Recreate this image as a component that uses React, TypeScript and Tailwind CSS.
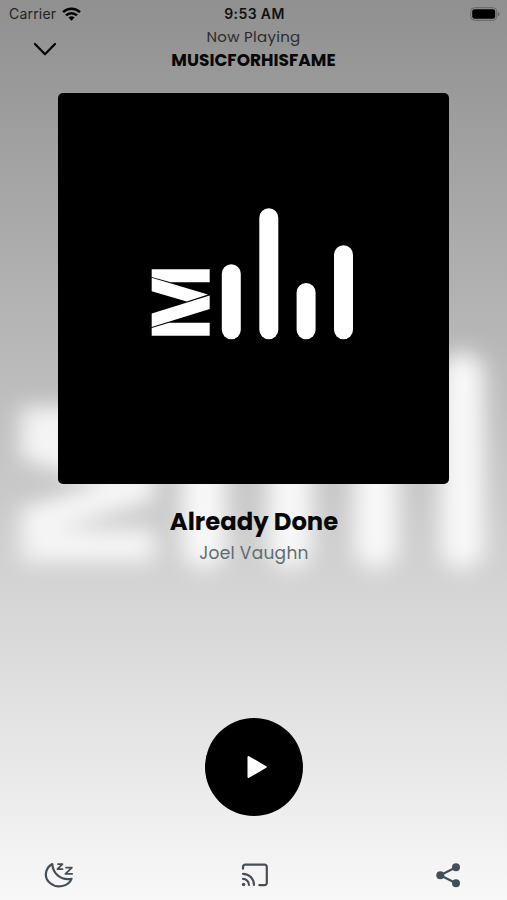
interface LogoProps {
  className?: string;
  fill: string;
}

function Logo({ className, fill }: LogoProps) {
  return (
    <svg viewBox="0 0 391 391" className={className} fill={fill}>
      <path d="M93.7 176.3h58v13h-39L93.7 184z" />
      <path d="M93.7 184.8l56.3 16.8-21.3 6.8-35-10.2z" />
      <path d="M151.7 202.5V216l-58 18v-13.5z" />
      <path d="M151.7 229.7v13h-58v-7.8l17.500-5.200z" />
      <rect x="163.8" y="171.3" width="19" height="75" rx="9.5" />
      <rect x="201.3" y="115.2" width="19" height="131" rx="9.5" />
      <rect x="238.6" y="190" width="19" height="56.2" rx="9.5" />
      <rect x="276" y="152.3" width="19" height="94" rx="9.5" />
    </svg>
  );
}

function Backdrop() {
  return (
    <div className="absolute inset-0 -z-10 overflow-hidden bg-black">
      <Logo
        fill="#f8f8f8"
        className="absolute left-1/2 top-[2px] size-[900px] max-w-none -translate-x-[449px] blur-[10.5px]"
      />
      <div className="absolute inset-0 bg-linear-to-b from-[#f8f8f8]/58 to-[#f8f8f8]" />
    </div>
  );
}

function StatusBar() {
  return (
    <div className="grid h-[27px] grid-cols-3 items-center pl-[9px] pr-[7px] font-['Inter','Liberation_Sans',sans-serif] text-[14px] text-[#222]">
      <div className="flex items-center gap-[6px]">
        <span className="tracking-[0.2px]">Carrier</span>
        <svg width="19" height="14" viewBox="0 0 19 14" fill="none" stroke="#000" strokeWidth="2.5">
          <path d="M1 5.1a12.2 12.2 0 0 1 17 0" />
          <path d="M4 8.4a7.8 7.8 0 0 1 11 0" />
          <path d="M9.5 13.7L6.5 10.6a4.3 4.3 0 0 1 6 0z" fill="#000" stroke="none" />
        </svg>
      </div>
      <span className="text-center font-semibold tracking-[0.4px] text-[#111]">9:53 AM</span>
      <svg className="justify-self-end" width="30" height="14" viewBox="0 0 30 14">
        <rect x="0.7" y="0.7" width="26" height="12.6" rx="3.8" fill="none" stroke="#666" strokeWidth="1" />
        <rect x="2.2" y="2.2" width="23" height="9.6" rx="2.4" />
        <path d="M27.9 4.7c2.2.8 2.2 3.8 0 4.6z" fill="#666" />
      </svg>
    </div>
  );
}

function Header() {
  return (
    <header className="relative h-[66px] text-center">
      <button aria-label="Close" className="absolute left-[33px] top-[15px]">
        <svg width="24" height="15" viewBox="0 0 24 15" fill="none" stroke="#000" strokeWidth="2.2" strokeLinecap="round" strokeLinejoin="round">
          <path d="M2 2l10 10.3L22 2" />
        </svg>
      </button>
      <p className="text-[15px] leading-[20px] tracking-[0.3px] text-[#2c2c2c]">Now Playing</p>
      <h1 className="mt-[3px] text-[17px] font-bold leading-[21px] text-[#080808]">MUSICFORHISFAME</h1>
    </header>
  );
}

function SleepIcon() {
  return (
    <svg width="30" height="28" viewBox="0 0 30 28" fill="none" stroke="#434f57" strokeWidth="2.2" strokeLinejoin="round" strokeLinecap="round">
      <path d="M8.3 3C1 7-.5 17 6 22c7 6 18.5 3.5 21.5-4.2-5.5 1-10-.2-13.5-3.1C10.5 11.7 8.5 8 8.3 3z" />
      <path d="M13.3 3.2h5.2l-5.1 5h5.8M21.3 6.6h6.6l-6.5 6.2h7.4" strokeWidth="1.8" strokeLinecap="butt" />
    </svg>
  );
}

function CastIcon() {
  return (
    <svg width="28" height="26" viewBox="0 0 28 26" fill="none" stroke="#434f57" strokeWidth="2.2" strokeLinecap="round">
      <path d="M2 6.7V4.9A2.3 2.3 0 0 1 4.3 2.6h19.2a2.3 2.3 0 0 1 2.3 2.3v15.9a2.3 2.3 0 0 1-2.3 2.3h-5.2" />
      <path d="M2 11.8c6.2 0 11 5 11 11.2M2 16.9c3.3 0 6 2.7 6 6.1" />
      <circle cx="2.6" cy="22.5" r="1.7" fill="#434f57" stroke="none" />
    </svg>
  );
}

function ShareIcon() {
  return (
    <svg width="26" height="26" viewBox="0 0 26 26" fill="#434f57">
      <path d="M21 5.3L5.3 13.3l15.7 8" fill="none" stroke="#434f57" strokeWidth="2.2" />
      <circle cx="21" cy="5.3" r="4" />
      <circle cx="5.3" cy="13.3" r="4" />
      <circle cx="21" cy="21.3" r="4" />
    </svg>
  );
}

export default function App() {
  return (
    <div className="relative isolate flex h-[900px] w-[507px] flex-col overflow-hidden font-['Poppins','Inter','Liberation_Sans',sans-serif]">
      <Backdrop />
      <StatusBar />
      <Header />
      <div className="ml-[58px] size-[391px] shrink-0 overflow-hidden rounded-[5px] bg-black">
        <Logo fill="#fff" className="size-full" />
      </div>
      <div className="mt-[22px] pl-px text-center">
        <h2 className="text-[24.3px] font-bold leading-[32px] text-[#080808]">Already Done</h2>
        <p className="mt-[3px] text-[17px] leading-[24px] tracking-[0.3px] text-[#606b70]">Joel Vaughn</p>
      </div>
      <button aria-label="Play" className="mt-[153px] flex size-[98px] shrink-0 items-center justify-center self-center rounded-full bg-black">
        <svg width="20" height="24" viewBox="0 0 20 24" className="ml-[7px]" fill="#fff" stroke="#fff" strokeWidth="2" strokeLinejoin="round">
          <path d="M1.5 2v20L18.7 12z" />
        </svg>
      </button>
      <nav className="mt-auto flex h-[50px] items-center justify-between pl-[44px] pr-[46px]">
        <SleepIcon />
        <CastIcon />
        <ShareIcon />
      </nav>
    </div>
  );
}
